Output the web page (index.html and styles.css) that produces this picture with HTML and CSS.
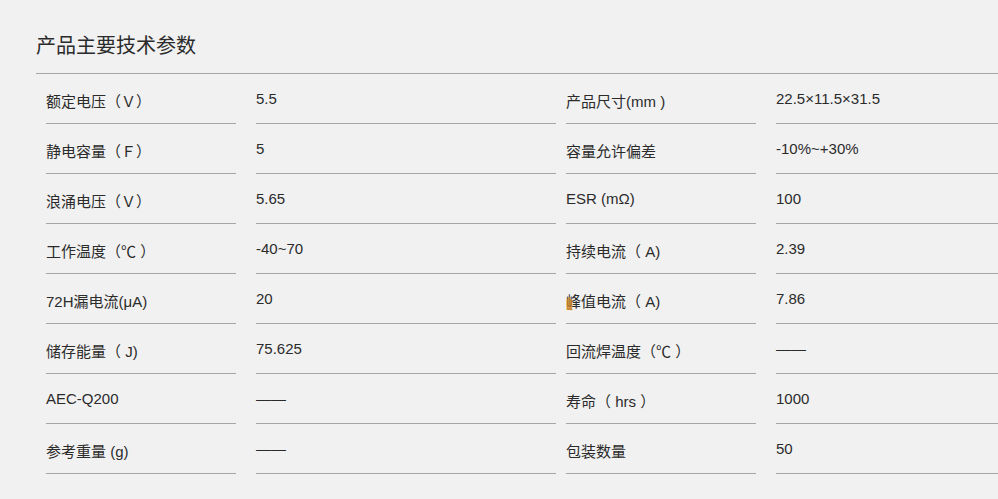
FILE: index.html
```html
<!DOCTYPE html>
<html lang="zh-CN">
<head>
<meta charset="utf-8">
<title>产品主要技术参数</title>
<link rel="stylesheet" href="styles.css">
</head>
<body>
<div class="spec">
  <h2 class="spec-title">产品主要技术参数</h2>
  <div class="spec-grid">
    <div class="cell label">额定电压（Ｖ）</div>
    <div class="cell value">5.5</div>
    <div class="cell label">产品尺寸(mm )</div>
    <div class="cell value">22.5×11.5×31.5</div>

    <div class="cell label">静电容量（Ｆ）</div>
    <div class="cell value">5</div>
    <div class="cell label">容量允许偏差</div>
    <div class="cell value">-10%~+30%</div>

    <div class="cell label">浪涌电压（Ｖ）</div>
    <div class="cell value">5.65</div>
    <div class="cell label">ESR (mΩ)</div>
    <div class="cell value">100</div>

    <div class="cell label">工作温度（℃ ）</div>
    <div class="cell value">-40~70</div>
    <div class="cell label">持续电流（ A)</div>
    <div class="cell value">2.39</div>

    <div class="cell label">72H漏电流(μA)</div>
    <div class="cell value">20</div>
    <div class="cell label"><span class="mark">峰</span>值电流（ A)</div>
    <div class="cell value">7.86</div>

    <div class="cell label">储存能量（ J)</div>
    <div class="cell value">75.625</div>
    <div class="cell label">回流焊温度（℃ ）</div>
    <div class="cell value">——</div>

    <div class="cell label">AEC-Q200</div>
    <div class="cell value">——</div>
    <div class="cell label">寿命（ hrs ）</div>
    <div class="cell value">1000</div>

    <div class="cell label">参考重量 (g)</div>
    <div class="cell value">——</div>
    <div class="cell label">包装数量</div>
    <div class="cell value">50</div>
  </div>
</div>
</body>
</html>
```

FILE: styles.css
```css
html, body {
  margin: 0;
  padding: 0;
  background: #f1f1f1;
  overflow: hidden;
}

body {
  font-family: "Liberation Sans", "Noto Sans CJK SC", sans-serif;
  color: #2b2b2b;
}

.spec {
  padding: 30px 0 0 36px;
}

.spec-title {
  margin: 0;
  padding: 0 0 14px 0;
  font-size: 20px;
  font-weight: normal;
  color: #2b2b2b;
  border-bottom: 1px solid #a6a6a6;
}

.spec-grid {
  display: grid;
  grid-template-columns: 210px 310px 210px 1fr;
}

.cell {
  box-sizing: border-box;
  height: 50px;
  padding-top: 16px;
  font-size: 15px;
  border-bottom: 1px solid #a6a6a6;
  white-space: nowrap;
}

.label {
  margin: 0 10px;
}

.value {
  margin-left: 10px;
}

.mark {
  position: relative;
}

.mark::after {
  content: "峰";
  position: absolute;
  left: 0;
  top: 0;
  color: #c8801c;
  -webkit-text-stroke: 0.4px #c8801c;
  clip-path: inset(0 58% 0 0);
}
```
